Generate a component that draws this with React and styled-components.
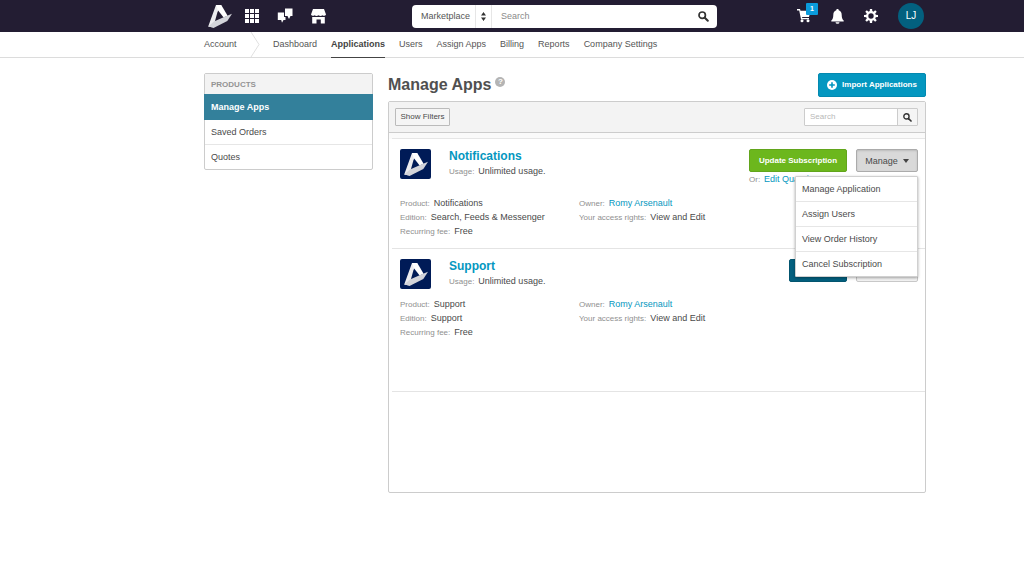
import React from "react";
import styled, { createGlobalStyle, css } from "styled-components";

const Global = createGlobalStyle`
  *, *::before, *::after { box-sizing: border-box; }
  body {
    margin: 0;
    background: #fff;
    color: #4a4a4a;
    font-family: "Liberation Sans", Arial, Helvetica, sans-serif;
    font-size: 9px;
    line-height: 14px;
  }
  button, input, select { font: inherit; color: inherit; margin: 0; }
  a { color: inherit; text-decoration: none; }
  ul { list-style: none; margin: 0; padding: 0; }
  svg { display: block; flex: none; }
`;

const TopBar = styled.header`
  display: flex;
  align-items: center;
  height: 32px;
  padding: 0 100px 0 207px;
  background: #231d33;
  color: #fff;
`;

const IconGroup = styled.nav`
  display: flex;
  align-items: center;
  gap: ${(p) => p.$gap}px;
  width: ${(p) => p.$width}px;
  flex: none;
`;

const IconLink = styled.a`
  position: relative;
  display: flex;
`;

const HomeLink = styled(IconLink)`
  width: 20px;
`;

const SearchBar = styled.form`
  display: flex;
  align-items: center;
  flex: 1;
  height: 23px;
  margin-right: 80px;
  background: #fff;
  border-radius: 4px;
  color: #555;
  overflow: hidden;
`;

const ScopeBox = styled.div`
  display: flex;
  align-items: center;
  flex: none;
  height: 100%;
  width: 80px;
  border-right: 1px solid #e6e6e6;
`;

const ScopeSelect = styled.select`
  appearance: none;
  border: 0;
  border-right: 1px solid #e6e6e6;
  background: none;
  width: 64px;
  height: 100%;
  padding: 0 0 0 9px;
  flex: none;
`;

const ScopeArrows = styled.svg`
  margin-left: 5px;
`;

const BarInput = styled.input`
  flex: 1;
  min-width: 0;
  border: 0;
  padding: 0 9px;
  background: none;
  outline: 0;
  &::placeholder { color: #8a8a8a; opacity: 1; }
`;

const PlainButton = styled.button`
  display: flex;
  border: 0;
  background: none;
  padding: 0 8px 0 0;
`;

const CartBadge = styled.span`
  position: absolute;
  left: 9px;
  top: -6px;
  width: 12px;
  height: 12px;
  background: #0a9bdc;
  border-radius: 1px;
  font-size: 7px;
  line-height: 12px;
  font-weight: bold;
  text-align: center;
`;

const Avatar = styled.button`
  width: 26px;
  height: 26px;
  border: 0;
  border-radius: 50%;
  padding: 0;
  background: #03607f;
  color: #fff;
  font-size: 10px;
`;

const SubNav = styled.nav`
  display: flex;
  height: 26px;
  padding: 0 99px 0 204px;
  border-bottom: 1px solid #dcdcdc;
  color: #555;
`;

const Crumb = styled.a`
  padding-top: 5px;
  width: 46px;
`;

const Tabs = styled.ul`
  display: flex;
  gap: 14px;
  margin-left: 13px;
`;

const Tab = styled.a`
  display: block;
  height: 26px;
  padding-top: 5px;
  ${(p) => p.$active && css`
    font-weight: bold;
    color: #444;
    border-bottom: 1px solid #444;
  `}
`;

const Page = styled.div`
  display: grid;
  grid-template-columns: 169px 1fr;
  column-gap: 15px;
  align-items: start;
  padding: 15px 98px 40px 204px;
`;

const SideBox = styled.nav`
  border: 1px solid #ccc;
  border-radius: 2px;
`;

const SideTitle = styled.h2`
  margin: 0;
  height: 20px;
  padding: 0 6px;
  background: #f3f3f3;
  color: #949494;
  font-size: 8px;
  line-height: 22px;
  font-weight: bold;
`;

const SideLink = styled.a`
  display: block;
  height: ${(p) => (p.$active ? 26 : 25)}px;
  padding: 0 6px;
  line-height: 24px;
  border-bottom: 1px solid #e6e6e6;
  ${(p) => p.$active && css`
    margin: 0 -1px;
    padding: 0 7px;
    line-height: 26px;
    background: #33809b;
    border: 0;
    color: #fff;
    font-weight: bold;
  `}
  li:last-child > & { border-bottom: 0; height: 24px; }
`;

const Heading = styled.div`
  display: flex;
  align-items: flex-start;
  height: 28px;
`;

const Title = styled.h1`
  margin: 0;
  color: #505050;
  font-size: 16px;
  line-height: 24px;
`;

const Help = styled.button`
  width: 10px;
  height: 10px;
  margin: 4px auto 0 4px;
  padding: 0;
  border: 0;
  border-radius: 50%;
  background: #b4b4b4;
  color: #fff;
  font-size: 8px;
  line-height: 10px;
  font-weight: bold;
`;

const tones = {
  blue: css`background: #0497c0; border-color: #0389b0; color: #fff;`,
  green: css`background: #6cb71d; border-color: #62a51c; color: #fff;`,
  navy: css`background: #03607f; border-color: #03556f; color: #fff;`,
  pressed: css`background: #d9d9d9; border-color: #ababab; box-shadow: inset 0 1px 2px #bbb;`,
  plain: css`background: #f3f3f3; border-color: #c8c8c8;`,
};

const ActionButton = styled.button`
  display: flex;
  align-items: center;
  justify-content: center;
  gap: 5px;
  height: ${(p) => (p.$tone === "blue" ? 24 : 23)}px;
  width: ${(p) => p.$width}px;
  padding: 0;
  border: 1px solid;
  border-radius: 2px;
  font-size: ${(p) => (p.$strong ? 8 : 9)}px;
  font-weight: ${(p) => (p.$strong ? "bold" : "normal")};
  white-space: nowrap;
  ${(p) => tones[p.$tone]}
`;

const Caret = styled.span`
  border: 3px solid transparent;
  border-top: 4px solid #444;
  border-bottom: 0;
`;

const Panel = styled.section`
  border: 1px solid #ccc;
  border-radius: 2px;
  min-height: 392px;
  background: linear-gradient(#fafafa 37px, #fff 37px);
`;

const Toolbar = styled.div`
  display: flex;
  align-items: center;
  justify-content: space-between;
  height: 31px;
  padding: 0 7px 0 6px;
  background: #f3f3f3;
  border-bottom: 1px solid #ccc;
`;

const FilterButton = styled.button`
  width: 55px;
  height: 18px;
  padding: 0;
  border: 1px solid #bbb;
  border-radius: 1px;
  background: #f5f5f5;
  font-size: 8px;
`;

const FilterSearch = styled.form`
  display: flex;
  height: 18px;
  border: 1px solid #ccc;
  border-radius: 1px;
  background: #fff;
`;

const FilterInput = styled.input`
  width: 92px;
  border: 0;
  padding: 0 5px;
  background: none;
  font-size: 8px;
  outline: 0;
  &::placeholder { color: #b8b8b8; opacity: 1; }
`;

const FilterGo = styled.button`
  display: flex;
  align-items: center;
  justify-content: center;
  width: 20px;
  border: 0;
  border-left: 1px solid #ccc;
  padding: 0;
  background: #f5f5f5;
`;

const List = styled.ul`
  margin: 5px 0 0 3px;
  border-top: 1px solid #e6e6e6;
`;

const AppItem = styled.li`
  display: grid;
  grid-template-columns: 49px 1fr auto;
  padding: 10px 7px 0 8px;
  height: ${(p) => p.$height}px;
  grid-template-rows: ${(p) => p.$head}px auto;
  border-bottom: 1px solid #e4e4e4;
`;

const LogoTile = styled.span`
  display: flex;
  align-items: center;
  justify-content: center;
  width: 31px;
  height: 30px;
  border-radius: 2px;
  background: #001b57;
`;

const AppName = styled.h3`
  margin: 0;
  color: #0497c0;
  font-size: 12px;
  line-height: 15px;
`;

const Fact = styled.div`
  white-space: nowrap;
`;

const Label = styled.span`
  color: #8f8f8f;
  font-size: 8px;
  line-height: 8px;
  margin-right: 4px;
`;

const LinkText = styled.a`
  color: #0497c0;
`;

const Actions = styled.div`
  display: flex;
  align-items: flex-start;
  gap: 9px;
`;

const MenuAnchor = styled.div`
  position: relative;
`;

const Menu = styled.ul`
  position: absolute;
  z-index: 2;
  top: 27px;
  right: 0;
  width: 123px;
  background: #fff;
  border: 1px solid #d0d0d0;
  border-radius: 1px;
  box-shadow: 0 1px 3px rgba(0, 0, 0, 0.35);
`;

const MenuItem = styled.a`
  display: block;
  height: 25px;
  padding: 0 6px;
  line-height: 24px;
  border-bottom: 1px solid #e6e6e6;
  li:last-child > & { border-bottom: 0; height: 24px; }
`;

const Facts = styled.div`
  grid-column: 1 / -1;
  display: grid;
  grid-template-columns: 179px 1fr;
  align-content: start;
`;

const Logo = () => (
  <svg width="26" height="25" viewBox="0 0 26 25" aria-hidden="true">
    <path d="M9 1h5.300L10.500 8 8 17 7 23.700 1.200 22.500z" fill="#ececef" />
    <path d="M9 1h5.300l6.300 10.800-4 1.800L10.800 6z" fill="#fff" />
    <path d="M1.200 22.500L7 17.500l11.300-5L25 9.700l-4.700 7.300L7 23.700z" fill="#d3d4da" />
  </svg>
);

const GridIcon = () => (
  <svg width="14" height="14" viewBox="0 0 14 14" fill="#fff" aria-hidden="true">
    {[0, 5, 10].map((y) => [0, 5, 10].map((x) => <rect key={`${x}-${y}`} x={x} y={y} width="4" height="4" />))}
  </svg>
);

const ChatIcon = () => (
  <svg width="16" height="16" viewBox="0 0 16 16" fill="#fff" aria-hidden="true">
    <path d="M8 .500h7.500V8H13.500L12 11l-1.500-3H8z" />
    <path d="M.800 4.500H7V9h1.500v3H6.500L5 14.800 4.200 12H.800z" />
  </svg>
);

const StoreIcon = () => (
  <svg width="15" height="15" viewBox="0 0 15 15" fill="#fff" aria-hidden="true">
    <path d="M2 0h11l2 5.500a2 1.500 0 0 1-3.500.700 2.500 1.500 0 0 1-4 0 2.500 1.500 0 0 1-4 0A2 1.500 0 0 1 0 5.500z" />
    <path d="M1.200 8h12.600v6.500H9.800v-4H5.500v4H1.200z" />
  </svg>
);

const SearchIcon = ({ size = 11 }) => (
  <svg width={size} height={size} viewBox="0 0 11 11" fill="none" stroke="#333" aria-hidden="true">
    <circle cx="4.200" cy="4.200" r="3.200" strokeWidth="1.700" />
    <path d="M6.800 6.800L9.800 9.800" strokeWidth="2" strokeLinecap="round" />
  </svg>
);

const CartIcon = () => (
  <svg width="14" height="14" viewBox="0 0 14 14" fill="#fff" aria-hidden="true">
    <path d="M0 0h3l.5 1.700H13.500L12 8H5l.3 1h6.700v1.300H4L2.200 1.500H0z" />
    <circle cx="5" cy="11.800" r="1.500" />
    <circle cx="11" cy="11.800" r="1.500" />
  </svg>
);

const BellIcon = () => (
  <svg width="13" height="15" viewBox="0 0 13 15" fill="#fff" aria-hidden="true">
    <path d="M6.500 0c.8 0 1.200.5 1.200 1.200C9.800 1.800 10.700 3.500 10.700 6c0 3 .8 4.500 2 5.500v1H.3v-1c1.200-1 2-2.500 2-5.500 0-2.500.9-4.200 3-4.800C5.300.5 5.700 0 6.500 0zM4.500 13.300h4a2 1.500 0 0 1-4 0z" />
  </svg>
);

const GearIcon = () => (
  <svg width="14" height="14" viewBox="-7 -7 14 14" aria-hidden="true">
    {[0, 45, 90, 135, 180, 225, 270, 315].map((a) => (
      <path key={a} d="M-1.300 -4l.2-3h2.200l.2 3z" fill="#fff" transform={`rotate(${a})`} />
    ))}
    <circle r="3.800" fill="none" stroke="#fff" strokeWidth="2.200" />
  </svg>
);

const PlusIcon = () => (
  <svg width="10" height="10" viewBox="0 0 10 10" aria-hidden="true">
    <circle cx="5" cy="5" r="5" fill="#fff" />
    <path d="M5 2.200v5.600M2.200 5h5.600" stroke="#0497c0" strokeWidth="1.600" />
  </svg>
);

const tabs = ["Dashboard", "Applications", "Users", "Assign Apps", "Billing", "Reports", "Company Settings"];
const products = ["Manage Apps", "Saved Orders", "Quotes"];
const menuItems = ["Manage Application", "Assign Users", "View Order History", "Cancel Subscription"];

const AppRow = ({ name, edition, height, head, children }) => (
  <AppItem $height={height} $head={head}>
    <LogoTile><Logo /></LogoTile>
    <div>
      <AppName><a href="#app">{name}</a></AppName>
      <Fact><Label>Usage:</Label>Unlimited usage.</Fact>
    </div>
    <Actions>{children}</Actions>
    <Facts>
      <div>
        <Fact><Label>Product:</Label>{name}</Fact>
        <Fact><Label>Edition:</Label>{edition}</Fact>
        <Fact><Label>Recurring fee:</Label>Free</Fact>
      </div>
      <div>
        <Fact><Label>Owner:</Label><LinkText href="#owner">Romy Arsenault</LinkText></Fact>
        <Fact><Label>Your access rights:</Label>View and Edit</Fact>
      </div>
    </Facts>
  </AppItem>
);

export default function App() {
  return (
    <>
      <Global />
      <TopBar>
        <IconGroup $gap={18} $width={205} aria-label="Main">
          <HomeLink href="#home" aria-label="Home"><Logo /></HomeLink>
          <IconLink href="#apps" aria-label="Apps"><GridIcon /></IconLink>
          <IconLink href="#messages" aria-label="Messages"><ChatIcon /></IconLink>
          <IconLink href="#store" aria-label="Store"><StoreIcon /></IconLink>
        </IconGroup>
        <SearchBar>
          <ScopeBox>
            <ScopeSelect aria-label="Search in"><option>Marketplace</option></ScopeSelect>
            <ScopeArrows width="5" height="9" viewBox="0 0 5 9" fill="#333" aria-hidden="true">
              <path d="M0 3.500L2.500 0 5 3.500zM0 5.500L2.500 9 5 5.500z" />
            </ScopeArrows>
          </ScopeBox>
          <BarInput aria-label="Search" placeholder="Search" />
          <PlainButton type="button" aria-label="Search"><SearchIcon /></PlainButton>
        </SearchBar>
        <IconGroup $gap={20} $width={127} aria-label="User">
          <IconLink href="#cart" aria-label="Cart"><CartIcon /><CartBadge>1</CartBadge></IconLink>
          <IconLink href="#alerts" aria-label="Alerts"><BellIcon /></IconLink>
          <IconLink href="#settings" aria-label="Settings"><GearIcon /></IconLink>
          <Avatar type="button">LJ</Avatar>
        </IconGroup>
      </TopBar>
      <SubNav aria-label="Account">
        <Crumb href="#account">Account</Crumb>
        <svg width="10" height="25" viewBox="0 0 10 25" fill="none" stroke="#e0e0e0" aria-hidden="true">
          <path d="M1 0l8 12.500L1 25" />
        </svg>
        <Tabs>
          {tabs.map((t) => (
            <li key={t}><Tab href="#tab" $active={t === "Applications"}>{t}</Tab></li>
          ))}
        </Tabs>
      </SubNav>
      <Page>
        <SideBox aria-label="Products">
          <SideTitle>PRODUCTS</SideTitle>
          <ul>
            {products.map((p) => (
              <li key={p}><SideLink href="#product" $active={p === "Manage Apps"}>{p}</SideLink></li>
            ))}
          </ul>
        </SideBox>
        <main>
          <Heading>
            <Title>Manage Apps</Title>
            <Help type="button">?</Help>
            <ActionButton type="button" $tone="blue" $width={108} $strong><PlusIcon />Import Applications</ActionButton>
          </Heading>
          <Panel>
            <Toolbar>
              <FilterButton type="button">Show Filters</FilterButton>
              <FilterSearch>
                <FilterInput aria-label="Search apps" placeholder="Search" />
                <FilterGo type="button" aria-label="Search apps"><SearchIcon size={9} /></FilterGo>
              </FilterSearch>
            </Toolbar>
            <List>
              <AppRow name="Notifications" edition="Search, Feeds & Messenger" height={110} head={47}>
                <div>
                  <ActionButton type="button" $tone="green" $width={98} $strong>Update Subscription</ActionButton>
                  <Fact><Label>Or:</Label><LinkText href="#quantity">Edit Quantity</LinkText></Fact>
                </div>
                <MenuAnchor>
                  <ActionButton type="button" $tone="pressed" $width={62} aria-expanded="true">Manage<Caret /></ActionButton>
                  <Menu>
                    {menuItems.map((m) => (
                      <li key={m}><MenuItem href="#menu">{m}</MenuItem></li>
                    ))}
                  </Menu>
                </MenuAnchor>
              </AppRow>
              <AppRow name="Support" edition="Support" height={143} head={38}>
                <ActionButton type="button" $tone="navy" $width={58} aria-label="Upgrade" />
                <ActionButton type="button" $tone="plain" $width={62} aria-label="Manage" />
              </AppRow>
            </List>
          </Panel>
        </main>
      </Page>
    </>
  );
}
